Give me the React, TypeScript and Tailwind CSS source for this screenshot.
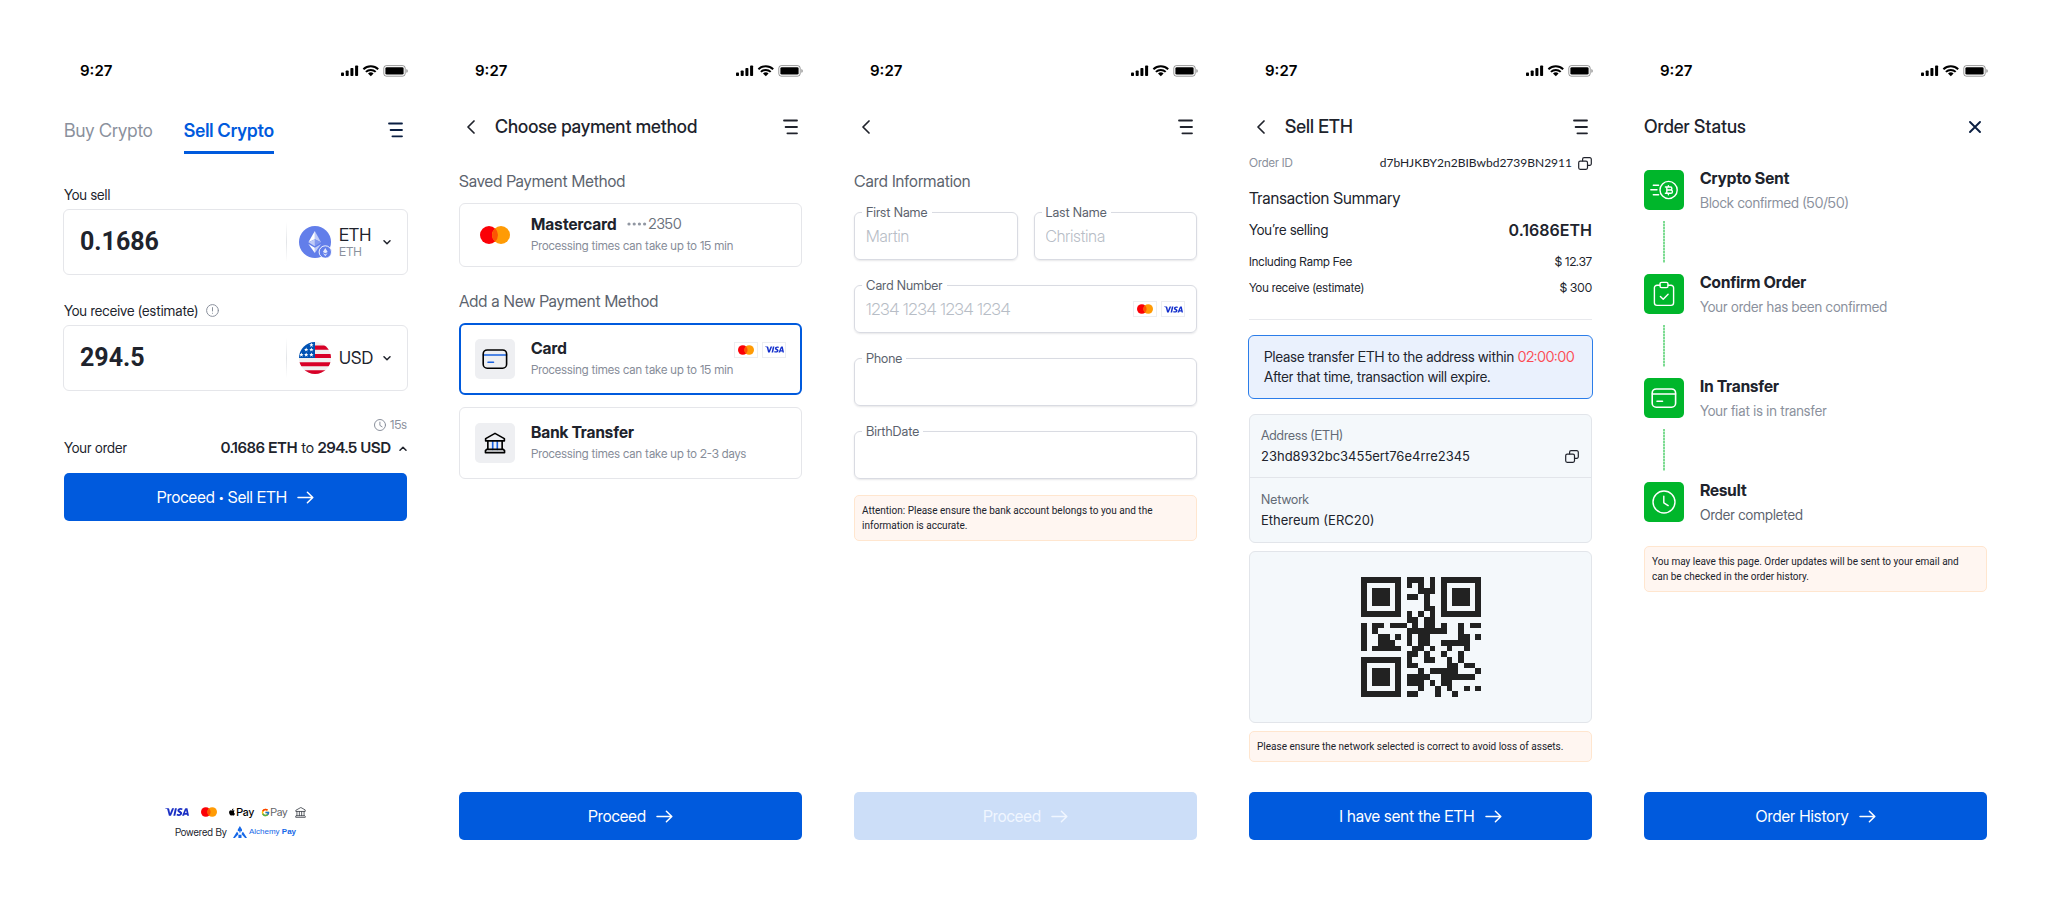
import type { ReactNode } from "react";
import { FaApple } from "react-icons/fa";
import { FcGoogle } from "react-icons/fc";
import { SiVisa } from "react-icons/si";

function StatusBar() {
  return (
    <div className="flex h-11 items-center justify-between pt-0.5 pr-[15px] pl-8 text-black">
      <span className="font-[Inter,sans-serif] text-[15px] leading-5 font-semibold">9:27</span>
      <svg width="67" height="12" viewBox="0 0 67 12" fill="currentColor" aria-hidden="true">
        <rect x="0" y="7.4" width="3" height="3.6" rx="0.8" />
        <rect x="4.7" y="5.4" width="3" height="5.6" rx="0.8" />
        <rect x="9.4" y="3" width="3" height="8" rx="0.8" />
        <rect x="14.1" y="0.5" width="3" height="10.5" rx="0.8" />
        <path d="M22.4 4.2a10.6 10.6 0 0 1 14.8 0M24.9 6.9a7 7 0 0 1 9.8 0" fill="none" stroke="currentColor" strokeWidth="2" />
        <path d="M29.8 11.2 27 8.6a4.2 4.2 0 0 1 5.6 0z" />
        <rect x="42.8" y="0.6" width="21.4" height="10.6" rx="2.6" fill="none" stroke="currentColor" strokeOpacity="0.4" />
        <rect x="44.4" y="2.2" width="18.2" height="7.4" rx="1.4" />
        <path d="M65.4 4v3.8a2 2 0 0 0 0-3.8z" opacity="0.45" />
      </svg>
    </div>
  );
}

function MenuIcon() {
  return (
    <svg width="15" height="16" viewBox="0 0 15 16" fill="none" stroke="currentColor" strokeWidth="1.8" strokeLinecap="round" aria-hidden="true">
      <path d="M1 1.5h13M2.6 8h11.4M4.4 14.3H14" />
    </svg>
  );
}

function Header({ title, back = true }: { title?: string; back?: boolean }) {
  return (
    <header className="flex h-[70px] items-center px-4">
      {back && (
        <button type="button" aria-label="Back" className="mr-5 ml-2 flex">
          <svg width="8" height="14" viewBox="0 0 8 14" fill="none" stroke="currentColor" strokeWidth="1.7" strokeLinecap="round" strokeLinejoin="round" aria-hidden="true">
            <path d="M7 1 1 7l6 6" />
          </svg>
        </button>
      )}
      {title && <h2 className="text-lg leading-6 font-medium">{title}</h2>}
      {back ? (
        <button type="button" aria-label="Menu" className="mr-1 ml-auto flex">
          <MenuIcon />
        </button>
      ) : (
        <button type="button" aria-label="Close" className="mr-1.5 ml-auto flex text-[#0b1f42]">
          <svg width="12" height="12" viewBox="0 0 12 12" fill="none" stroke="currentColor" strokeWidth="1.9" strokeLinecap="round" aria-hidden="true">
            <path d="m1 1 10 10M11 1 1 11" />
          </svg>
        </button>
      )}
    </header>
  );
}

function PrimaryButton({ children, disabled }: { children: ReactNode; disabled?: boolean }) {
  return (
    <button
      type="button"
      disabled={disabled}
      className="flex h-12 w-full items-center justify-center gap-2.5 rounded-[5px] bg-[#005add] text-base font-normal text-white disabled:bg-[#ccdef8] disabled:text-[#f0f6ff]"
    >
      {children}
      <svg width="17" height="13" viewBox="0 0 17 13" fill="none" stroke="currentColor" strokeWidth="1.5" strokeLinecap="round" strokeLinejoin="round" aria-hidden="true">
        <path d="M1 6.5h14.6M10.4 1.2l5.4 5.3-5.4 5.3" />
      </svg>
    </button>
  );
}

function Screen({ children, footer, label }: { children: ReactNode; footer?: ReactNode; label: string }) {
  return (
    <section aria-label={label} className="flex min-w-0 flex-col">
      <StatusBar />
      {children}
      {footer && <div className="mt-auto px-4 pb-5">{footer}</div>}
    </section>
  );
}

function Mastercard({ className }: { className: string }) {
  return (
    <svg viewBox="0 0 30 18" className={className} role="img" aria-label="Mastercard">
      <circle cx="9" cy="9" r="9" fill="#fb0007" />
      <circle cx="21" cy="9" r="9" fill="#ff9b05" />
      <path d="M15 2.3a9 9 0 0 1 0 13.4 9 9 0 0 1 0-13.4z" fill="#fc5404" />
    </svg>
  );
}

function Brands() {
  return (
    <span className="flex gap-1">
      <span className="flex h-4 w-6 items-center justify-center border border-[#eceef1] bg-white">
        <Mastercard className="h-2.5 w-4" />
      </span>
      <span className="flex h-4 w-6 items-center justify-center border border-[#eceef1] bg-white">
        <SiVisa size={19} color="#1430cc" aria-label="Visa" />
      </span>
    </span>
  );
}

function Notice({ children }: { children: ReactNode }) {
  return (
    <p className="rounded-[5px] border border-[#ffe6cf] bg-[#fff6f1] py-[7px] pr-3 pl-[7px] font-[Roboto,sans-serif] text-[10px] leading-[15px]">
      {children}
    </p>
  );
}

function ChevronDown({ className = "" }: { className?: string }) {
  return (
    <svg width="8" height="5" viewBox="0 0 8 5" fill="none" stroke="currentColor" strokeWidth="1.5" strokeLinecap="round" strokeLinejoin="round" className={className} aria-hidden="true">
      <path d="m1 .8 3 3 3-3" />
    </svg>
  );
}

function EthIcon() {
  return (
    <svg width="33" height="32" viewBox="0 0 33 32" aria-hidden="true">
      <circle cx="16" cy="16" r="16" fill="#627eea" />
      <path d="M15.8 5v8.3l6.2 3z" fill="#c0cbf7" />
      <path d="m15.8 5-6.4 11.3 6.4-3z" fill="#fff" />
      <path d="M15.8 20.3 22 16.3l-6.2-3z" fill="#8197ee" />
      <path d="m9.4 16.3 6.4 4v-7z" fill="#c0cbf7" />
      <path d="M15.8 21.7v5.2l6.3-8.9z" fill="#c0cbf7" />
      <path d="M15.8 21.7v5.2L9.4 18z" fill="#fff" />
      <circle cx="26.3" cy="26" r="6.2" fill="#627eea" stroke="#fff" strokeWidth="0.9" />
      <path d="m26.3 22-2.4 4 2.4 1.3 2.4-1.3zM26.3 30.3l-2.4-3.2 2.4 1.3 2.4-1.3z" fill="#e5eafc" />
    </svg>
  );
}

const FLAG_STARS = [
  [12.4, 3],
  [7.2, 7.6],
  [12.4, 7.6],
  [2.4, 12.8],
  [7.2, 12.8],
  [12.4, 12.8],
];

function UsFlag() {
  return (
    <svg width="32" height="32" viewBox="0 0 32 32" aria-hidden="true">
      <clipPath id="flag-circle">
        <circle cx="16" cy="16" r="16" />
      </clipPath>
      <g clipPath="url(#flag-circle)">
        <path fill="#f0f0f0" d="M0 0h32v32H0z" />
        <path fill="#d80027" d="M16 3.6h16v4.1H16zM16 11.9h16V16H16zM0 20.2h32v4.1H0zM0 28.2h32V32H0z" />
        <path fill="#0052b4" d="M0 0h16v16H0z" />
        <g fill="#fff">
          {FLAG_STARS.map(([x, y]) => (
            <path key={`${x}-${y}`} d={`M${x} ${y - 2.2}l.6 1.5h1.6l-1.3 1 .5 1.6-1.4-1-1.4 1 .5-1.6-1.3-1h1.6z`} />
          ))}
        </g>
      </g>
    </svg>
  );
}

function AmountField({ id, value, icon, currency, network }: { id: string; value: string; icon: ReactNode; currency: string; network?: string }) {
  return (
    <div className="-mx-px flex h-[66px] items-center rounded-[6px] border border-[#e5e6ea] pr-4 pl-4">
      <input
        id={id}
        defaultValue={value}
        inputMode="decimal"
        className="min-w-0 flex-1 bg-transparent font-[Roboto,sans-serif] text-[25px] font-bold outline-none"
      />
      <span className="h-10 w-px bg-linear-to-b from-white via-[#e3e5e8] to-white" />
      <label className="relative flex w-26 items-center pl-3">
        <span className="mr-[7px] w-[33px] shrink-0">{icon}</span>
        <span className="flex min-w-0 flex-1 flex-col">
          <select aria-label={`Currency for ${id}`} className="h-5 w-full appearance-none bg-transparent p-0 text-[17px] leading-5 outline-none">
            <option>{currency}</option>
          </select>
          {network && <span className="text-xs leading-[14px] text-[#8a909c]">{network}</span>}
        </span>
        <ChevronDown className="pointer-events-none shrink-0" />
      </label>
    </div>
  );
}

function ClockIcon({ size, strokeWidth }: { size: number; strokeWidth: number }) {
  return (
    <svg width={size} height={size} viewBox="0 0 24 24" fill="none" stroke="currentColor" strokeWidth={strokeWidth} strokeLinecap="round" strokeLinejoin="round" aria-hidden="true">
      <circle cx="12" cy="12" r="11" />
      <path d="M11.8 6.2v6.6l4.4 2.8" />
    </svg>
  );
}

function BankIcon({ size, accent, strokeWidth }: { size: number; accent: string; strokeWidth: number }) {
  return (
    <svg width={size} height={size} viewBox="0 0 24 24" fill="none" stroke="currentColor" strokeWidth={strokeWidth} strokeLinecap="round" strokeLinejoin="round" aria-hidden="true">
      <path d="M9.5 10v9M14.5 10v9" stroke={accent} />
      <path d="M12 1.5 1.8 7.2v2.5h20.4V7.2zM4.2 10v9M19.8 10v9M3 19h18l1.4 1.4v2.1H1.6v-2.1z" />
    </svg>
  );
}

function CardIcon({ accent, className = "" }: { accent: string; className?: string }) {
  return (
    <svg width="26" height="20" viewBox="0 0 26 20" fill="none" strokeWidth="1.6" strokeLinecap="round" className={className} aria-hidden="true">
      <path d="M1.5 6h23M6 13.2h5.5" stroke={accent} />
      <rect x="1.2" y="1" width="23.4" height="18.2" rx="4" stroke="currentColor" />
    </svg>
  );
}

function AlchemyIcon() {
  return (
    <svg width="14" height="12" viewBox="0 0 14 12" fill="#1668e8" aria-hidden="true">
      <path d="M6.9 0 9 3.4v2.2L7.6 4.8v1.8H6.3V4.8l-1.5.8V3.4zM3.9 5.8 5.2 7v1.6L1.9 12H0zM10 5.8 8.8 7v1.6l3.3 3.4H14zM5.4 8.8h3.1V12H5.4z" />
    </svg>
  );
}

function SellScreen() {
  return (
    <Screen
      label="Sell crypto"
      footer={
        <div className="flex flex-col items-center gap-1">
          <div className="flex h-4 items-center">
            <SiVisa size={24} color="#1a2fc4" aria-label="Visa" />
            <Mastercard className="ml-3 h-2.5 w-4" />
            <span className="ml-[11px] flex items-center text-[11px] leading-4 font-medium text-black">
              <FaApple size={8} aria-hidden="true" />
              Pay
            </span>
            <span className="ml-[7px] flex items-center text-[11px] leading-4 text-[#5f6368]">
              <FcGoogle size={9} aria-hidden="true" />
              Pay
            </span>
            <span className="ml-[7px] flex text-[#3c4048]">
              <BankIcon size={11} accent="currentColor" strokeWidth={1.8} />
            </span>
          </div>
          <div className="flex h-4 items-center text-[10px] leading-4">
            Powered By
            <span className="mr-0.5 ml-1.5 flex">
              <AlchemyIcon />
            </span>
            <a href="#alchemy-pay" className="font-['Liberation_Sans',sans-serif] text-[8px] text-[#1668e8]">
              Alchemy <strong>Pay</strong>
            </a>
          </div>
        </div>
      }
    >
      <div className="px-4">
        <div className="flex h-[62px] items-end" role="tablist">
          <button type="button" role="tab" aria-selected="false" className="pb-[11px] text-lg leading-6 text-[#8a909c]">
            Buy Crypto
          </button>
          <button type="button" role="tab" aria-selected="true" className="ml-[31px] border-b-3 border-[#005add] pb-2 text-lg leading-6 font-semibold text-[#005add]">
            Sell Crypto
          </button>
          <button type="button" aria-label="Menu" className="mr-1 mb-4 ml-auto flex text-[#0b1f42]">
            <MenuIcon />
          </button>
        </div>
        <label htmlFor="sell" className="mt-[31px] mb-[5px] flex h-[19px] items-center text-sm">
          You sell
        </label>
        <AmountField id="sell" value="0.1686" icon={<EthIcon />} currency="ETH" network="ETH" />
        <label htmlFor="receive" className="mt-[26px] mb-[5px] flex h-[19px] items-center gap-2 text-sm">
          You receive (estimate)
          <svg width="13" height="13" viewBox="0 0 13 13" fill="none" stroke="#8a909c" strokeLinecap="round" aria-hidden="true">
            <circle cx="6.5" cy="6.5" r="5.9" />
            <path d="M6.5 3.6v3.4M6.5 9.2v.1" />
          </svg>
        </label>
        <AmountField id="receive" value="294.5" icon={<UsFlag />} currency="USD" />
        <div className="mt-[25px] flex h-[18px] items-center justify-end gap-1 text-xs text-[#8a909c]">
          <ClockIcon size={12} strokeWidth={2} />
          15s
        </div>
        <div className="mt-1 mb-[15px] flex h-5 items-center text-sm">
          Your order
          <span className="ml-auto text-[15px]">
            <b className="font-semibold">0.1686 ETH</b> to <b className="font-semibold">294.5 USD</b>
          </span>
          <ChevronDown className="ml-2 rotate-180" />
        </div>
        <PrimaryButton>
          <span className="flex items-center gap-1">
            Proceed <span className="text-[10px]">•</span> Sell ETH
          </span>
        </PrimaryButton>
      </div>
    </Screen>
  );
}

interface MethodProps {
  icon: ReactNode;
  title: string;
  detail?: ReactNode;
  note: string;
  extra?: ReactNode;
  group: string;
  checked?: boolean;
  compact?: boolean;
}

function Method({ icon, title, detail, note, extra, group, checked, compact }: MethodProps) {
  return (
    <label
      className={
        (compact ? "h-16 " : "h-[72px] ") +
        "relative flex items-center rounded-[6px] border border-[#e5e6ea] px-[15px] has-checked:border-2 has-checked:border-[#005add] has-checked:px-[14px]"
      }
    >
      <input type="radio" name={group} defaultChecked={checked} className="sr-only" />
      <span className={(compact ? "" : "bg-[#eeeff2] ") + "flex size-10 shrink-0 items-center justify-center rounded-[5px]"}>{icon}</span>
      <span className="ml-4 flex flex-col gap-0.5">
        <span className="flex items-center text-base leading-5 font-bold">
          {title}
          {detail}
        </span>
        <span className="text-xs leading-5 text-[#868c98]">{note}</span>
      </span>
      {extra && <span className="mb-[19px] ml-auto">{extra}</span>}
    </label>
  );
}

function MethodScreen() {
  return (
    <Screen label="Choose payment method" footer={<PrimaryButton>Proceed</PrimaryButton>}>
      <Header title="Choose payment method" />
      <div className="px-4">
        <h3 className="mt-[7px] mb-2.5 text-base leading-6 text-[#5c636e]">Saved Payment Method</h3>
        <Method
          group="saved-method"
          compact
          icon={<Mastercard className="h-[18px] w-[30px]" />}
          title="Mastercard"
          note="Processing times can take up to 15 min"
          detail={
            <span className="ml-2.5 flex items-center gap-0.5 text-sm font-normal text-[#6b717c]">
              <svg width="20" height="4" viewBox="0 0 20 4" fill="#9197a2" aria-hidden="true">
                <circle cx="2" cy="2" r="1.6" />
                <circle cx="7.2" cy="2" r="1.6" />
                <circle cx="12.4" cy="2" r="1.6" />
                <circle cx="17.6" cy="2" r="1.6" />
              </svg>
              2350
            </span>
          }
        />
        <h3 className="mt-[22px] mb-2.5 text-base leading-6 text-[#5c636e]">Add a New Payment Method</h3>
        <div className="flex flex-col gap-3">
          <Method
            group="new-method"
            checked
            icon={<CardIcon accent="#1a63e0" className="text-black" />}
            title="Card"
            note="Processing times can take up to 15 min"
            extra={<Brands />}
          />
          <Method
            group="new-method"
            icon={
              <span className="text-black">
                <BankIcon size={22} accent="#1a63e0" strokeWidth={1.8} />
              </span>
            }
            title="Bank Transfer"
            note="Processing times can take up to 2-3 days"
          />
        </div>
      </div>
    </Screen>
  );
}

function Field({ id, label, placeholder, extra }: { id: string; label: string; placeholder?: string; extra?: ReactNode }) {
  return (
    <div className="relative flex h-12 min-w-0 flex-1 items-center rounded-[6px] border border-[#d9dbe2] pr-[11px] shadow-[0_1px_2px_rgba(16,24,40,0.1)]">
      <label htmlFor={id} className="absolute -top-[9px] left-[7px] bg-white px-1 text-[13px] leading-4 text-[#5c636e]">
        {label}
      </label>
      <input id={id} placeholder={placeholder} className="h-full w-full min-w-0 bg-transparent pl-[11px] text-base font-light outline-none placeholder:text-[#b7bdc6]" />
      {extra}
    </div>
  );
}

function CardScreen() {
  return (
    <Screen label="Card information" footer={<PrimaryButton disabled>Proceed</PrimaryButton>}>
      <Header />
      <form className="flex flex-col px-4">
        <h3 className="mt-[7px] mb-[19px] text-base leading-6 text-[#5c636e]">Card Information</h3>
        <div className="flex flex-col gap-[25px]">
          <div className="flex gap-4">
            <Field id="first-name" label="First Name" placeholder="Martin" />
            <Field id="last-name" label="Last Name" placeholder="Christina" />
          </div>
          <div className="flex">
            <Field id="card-number" label="Card Number" placeholder="1234 1234 1234 1234" extra={<Brands />} />
          </div>
          <div className="flex">
            <Field id="phone" label="Phone" />
          </div>
          <div className="flex">
            <Field id="birth-date" label="BirthDate" />
          </div>
        </div>
        <div className="mt-4">
          <Notice>Attention: Please ensure the bank account belongs to you and the information is accurate.</Notice>
        </div>
      </form>
    </Screen>
  );
}

function CopyButton() {
  return (
    <button type="button" aria-label="Copy" className="flex">
      <svg width="14" height="13" viewBox="0 0 14 13" fill="none" stroke="currentColor" strokeWidth="1.2" strokeLinecap="round" strokeLinejoin="round" aria-hidden="true">
        <rect x="0.7" y="4.2" width="8.8" height="8.1" rx="1.5" />
        <path d="M4.6 3.8V2.2A1.5 1.5 0 0 1 6.1.7h5.7a1.5 1.5 0 0 1 1.5 1.5v4.6a1.5 1.5 0 0 1-1.5 1.5H10" />
      </svg>
    </button>
  );
}

const QR_ROWS = [
  "111111101110101111111",
  "100000101010101000001",
  "101110100011101011101",
  "101110101101001011101",
  "101110100001001011101",
  "100000100001101000001",
  "111111101010101111111",
  "000000001101100000000",
  "101101110101101001011",
  "101000001111111001000",
  "100110101011000001101",
  "100111001011001111100",
  "101111100110100100100",
  "000000001101001001000",
  "111111101001100101000",
  "100000101100000110110",
  "101110100010111110001",
  "101110101111001111110",
  "101110101110101100000",
  "100000100010010100101",
  "111111101100010010000",
];

function QrCode() {
  const path = QR_ROWS.flatMap((row, y) => [...row].map((cell, x) => (cell === "1" ? `M${x} ${y}h1v1h-1z` : ""))).join("");
  return (
    <svg width="120" height="120" viewBox="0 0 21 21" fill="#222" shapeRendering="crispEdges" role="img" aria-label="Deposit address QR code">
      <path d={path} />
    </svg>
  );
}

function TransferScreen() {
  return (
    <Screen label="Sell ETH" footer={<PrimaryButton>I have sent the ETH</PrimaryButton>}>
      <Header title="Sell ETH" />
      <div className="px-4">
        <dl className="-mt-2 flex flex-col">
          <div className="flex h-[18px] items-center justify-between">
            <dt className="text-xs text-[#8a909c]">Order ID</dt>
            <dd className="flex items-center gap-1.5 font-[Lato,sans-serif] text-xs">
              d7bHJKBY2n2BIBwbd2739BN2911
              <CopyButton />
            </dd>
          </div>
        </dl>
        <h3 className="mt-3.5 text-base leading-6">Transaction Summary</h3>
        <dl className="border-b border-[#e8e9ed] pb-[21px]">
          <div className="mt-2 flex h-6 items-center justify-between">
            <dt className="text-sm">You’re selling</dt>
            <dd className="font-[Inter,sans-serif] text-base font-semibold">0.1686ETH</dd>
          </div>
          <div className="mt-2.5 flex h-5 items-center justify-between text-xs">
            <dt>Including Ramp Fee</dt>
            <dd>$ 12.37</dd>
          </div>
          <div className="mt-1.5 flex h-5 items-center justify-between text-xs">
            <dt>You receive (estimate)</dt>
            <dd>$ 300</dd>
          </div>
        </dl>
        <p className="-mx-px mt-[15px] flex h-16 flex-col justify-center rounded-[6px] border border-[#2b7de9] bg-[#eaf1fd] px-[15px] text-sm leading-5">
          <span>
            Please transfer ETH to the address within <span className="text-[#fc4b52]">02:00:00</span>
          </span>
          <span>After that time, transaction will expire.</span>
        </p>
        <dl className="mt-[15px] divide-y divide-[#e2e5ea] rounded-[6px] border border-[#e2e5ea] bg-[#f4f8fb]">
          <div className="flex h-[63px] flex-col justify-center px-[11px]">
            <dt className="text-[13px] leading-5 text-[#636a75]">Address (ETH)</dt>
            <dd className="flex items-center justify-between pr-px font-[Inter,sans-serif] text-[13px] leading-[22px]">
              23hd8932bc3455ert76e4rre2345
              <CopyButton />
            </dd>
          </div>
          <div className="flex h-16 flex-col justify-center px-[11px]">
            <dt className="text-[13px] leading-5 text-[#636a75]">Network</dt>
            <dd className="font-[Inter,sans-serif] text-[13px] leading-[22px]">Ethereum (ERC20)</dd>
          </div>
        </dl>
        <div className="my-2 flex h-[172px] items-center justify-center rounded-[6px] border border-[#e2e5ea] bg-[#f4f8fb]">
          <QrCode />
        </div>
        <Notice>Please ensure the network selected is correct to avoid loss of assets.</Notice>
      </div>
    </Screen>
  );
}

const STEPS = [
  {
    title: "Crypto Sent",
    note: "Block confirmed (50/50)",
    noteClass: "text-[#8a909c]",
    icon: (
      <svg width="28" height="20" viewBox="0 0 28 20" fill="none" stroke="currentColor" strokeWidth="1.4" strokeLinecap="round" strokeLinejoin="round" aria-hidden="true">
        <circle cx="18.6" cy="10" r="8.6" />
        <path d="M3.3 5.2h5.3M.8 9.8H7M3.3 14.8h5.3M15.4 7h5a1.5 1.5 0 0 1 0 3h-3.6 4a1.6 1.6 0 0 1 0 3.3h-5.4M16.8 7v6.3M18.4 5.6v1.2M18.4 13.5v1.2" />
      </svg>
    ),
  },
  {
    title: "Confirm Order",
    note: "Your order has been confirmed",
    noteClass: "text-[#8a909c]",
    icon: (
      <svg width="22" height="26" viewBox="0 0 22 26" fill="none" stroke="currentColor" strokeWidth="1.4" strokeLinecap="round" strokeLinejoin="round" aria-hidden="true">
        <path d="M7 4.2H4a2.6 2.6 0 0 0-2.6 2.6v15A2.6 2.6 0 0 0 4 24.4h14a2.6 2.6 0 0 0 2.6-2.6v-15A2.6 2.6 0 0 0 18 4.2h-3" />
        <rect x="7" y="1.4" width="8" height="5.2" rx="1.6" />
        <path d="m7.4 15.4 2.8 2.8 4.9-5" />
      </svg>
    ),
  },
  { title: "In Transfer", note: "Your fiat is in transfer", noteClass: "text-[#8a909c]", icon: <CardIcon accent="currentColor" /> },
  { title: "Result", note: "Order completed", noteClass: "text-[#5c636e]", icon: <ClockIcon size={24} strokeWidth={1.4} /> },
];

function StatusScreen() {
  return (
    <Screen label="Order status" footer={<PrimaryButton>Order History</PrimaryButton>}>
      <Header title="Order Status" back={false} />
      <div className="px-4">
        <ol className="mt-2">
          {STEPS.map((step, index) => (
            <li key={step.title} className="flex gap-4">
              <div className="flex flex-col items-center">
                <span className="flex size-10 items-center justify-center rounded-[5px] bg-[#00b62b] text-white">{step.icon}</span>
                {index < STEPS.length - 1 && (
                  <span className="my-[11px] h-[42px] w-0.5 bg-[repeating-linear-gradient(to_bottom,#7ddb92_0_2px,#c2efcb_2px_3px)]" />
                )}
              </div>
              <div className="-mt-[3px]">
                <h3 className="text-base leading-[22px] font-bold">{step.title}</h3>
                <p className={`mt-1 text-sm leading-5 ${step.noteClass}`}>{step.note}</p>
              </div>
            </li>
          ))}
        </ol>
        <div className="mt-[21px]">
          <Notice>You may leave this page. Order updates will be sent to your email and can be checked in the order history.</Notice>
        </div>
      </div>
    </Screen>
  );
}

export default function App() {
  return (
    <main className="grid min-h-screen grid-cols-5 gap-5 bg-white px-12 py-12 font-['Inter_Display',Inter,sans-serif] text-[#20232c]">
      <SellScreen />
      <MethodScreen />
      <CardScreen />
      <TransferScreen />
      <StatusScreen />
    </main>
  );
}
